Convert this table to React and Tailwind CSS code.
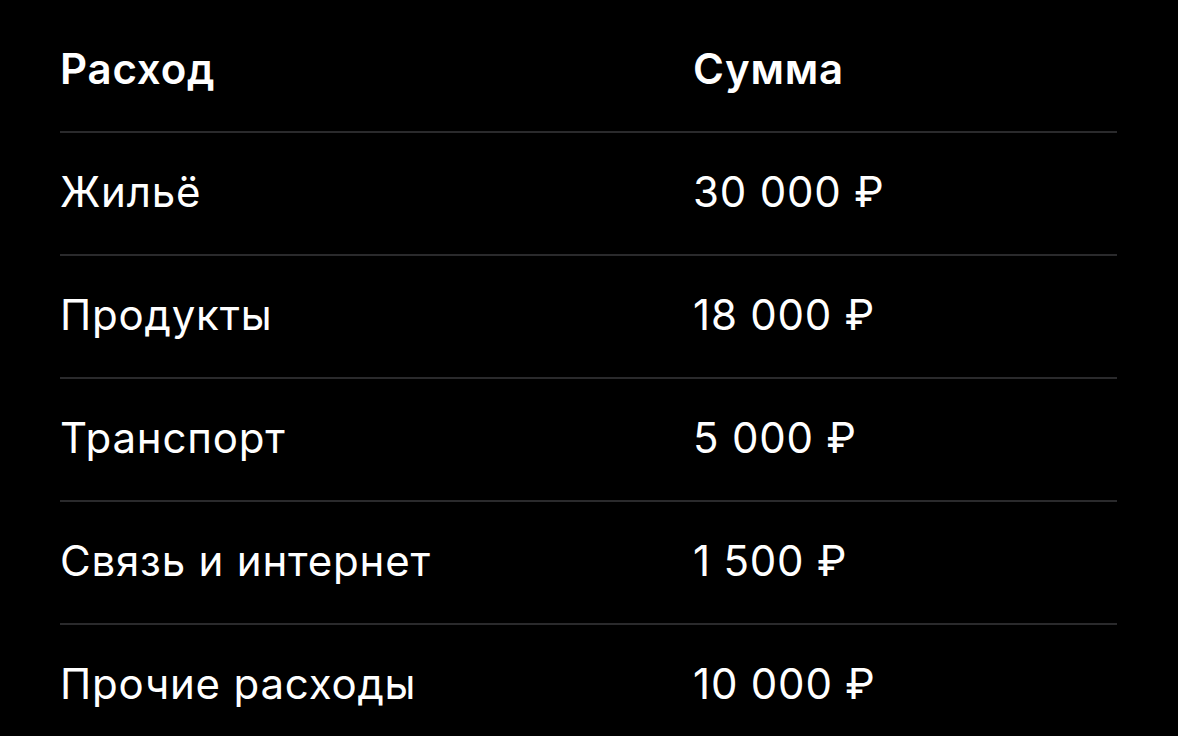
const rows = [
  ["Жильё", "30 000 ₽"],
  ["Продукты", "18 000 ₽"],
  ["Транспорт", "5 000 ₽"],
  ["Связь и интернет", "1 500 ₽"],
  ["Прочие расходы", "10 000 ₽"],
];

export default function App() {
  return (
    <div
      className="h-[736px] w-full overflow-hidden bg-black pt-[10px] pl-[60px] pr-[61px] text-white"
      style={{ fontFamily: "Inter, 'Noto Sans', sans-serif" }}
    >
      <div className="flex h-[123px] items-center border-b-2 border-[#2a2a2c] pb-1 text-[42px] font-semibold tracking-[0.8px]">
        <div className="w-[633px]">Расход</div>
        <div className="flex-1">Сумма</div>
      </div>
      {rows.map(([name, sum]) => (
        <div
          key={name}
          className="flex h-[123px] items-center border-b-2 border-[#2a2a2c] pb-1 text-[42px] font-normal tracking-[0.8px]"
        >
          <div className="w-[633px]">{name}</div>
          <div className="flex-1">{sum}</div>
        </div>
      ))}
    </div>
  );
}
